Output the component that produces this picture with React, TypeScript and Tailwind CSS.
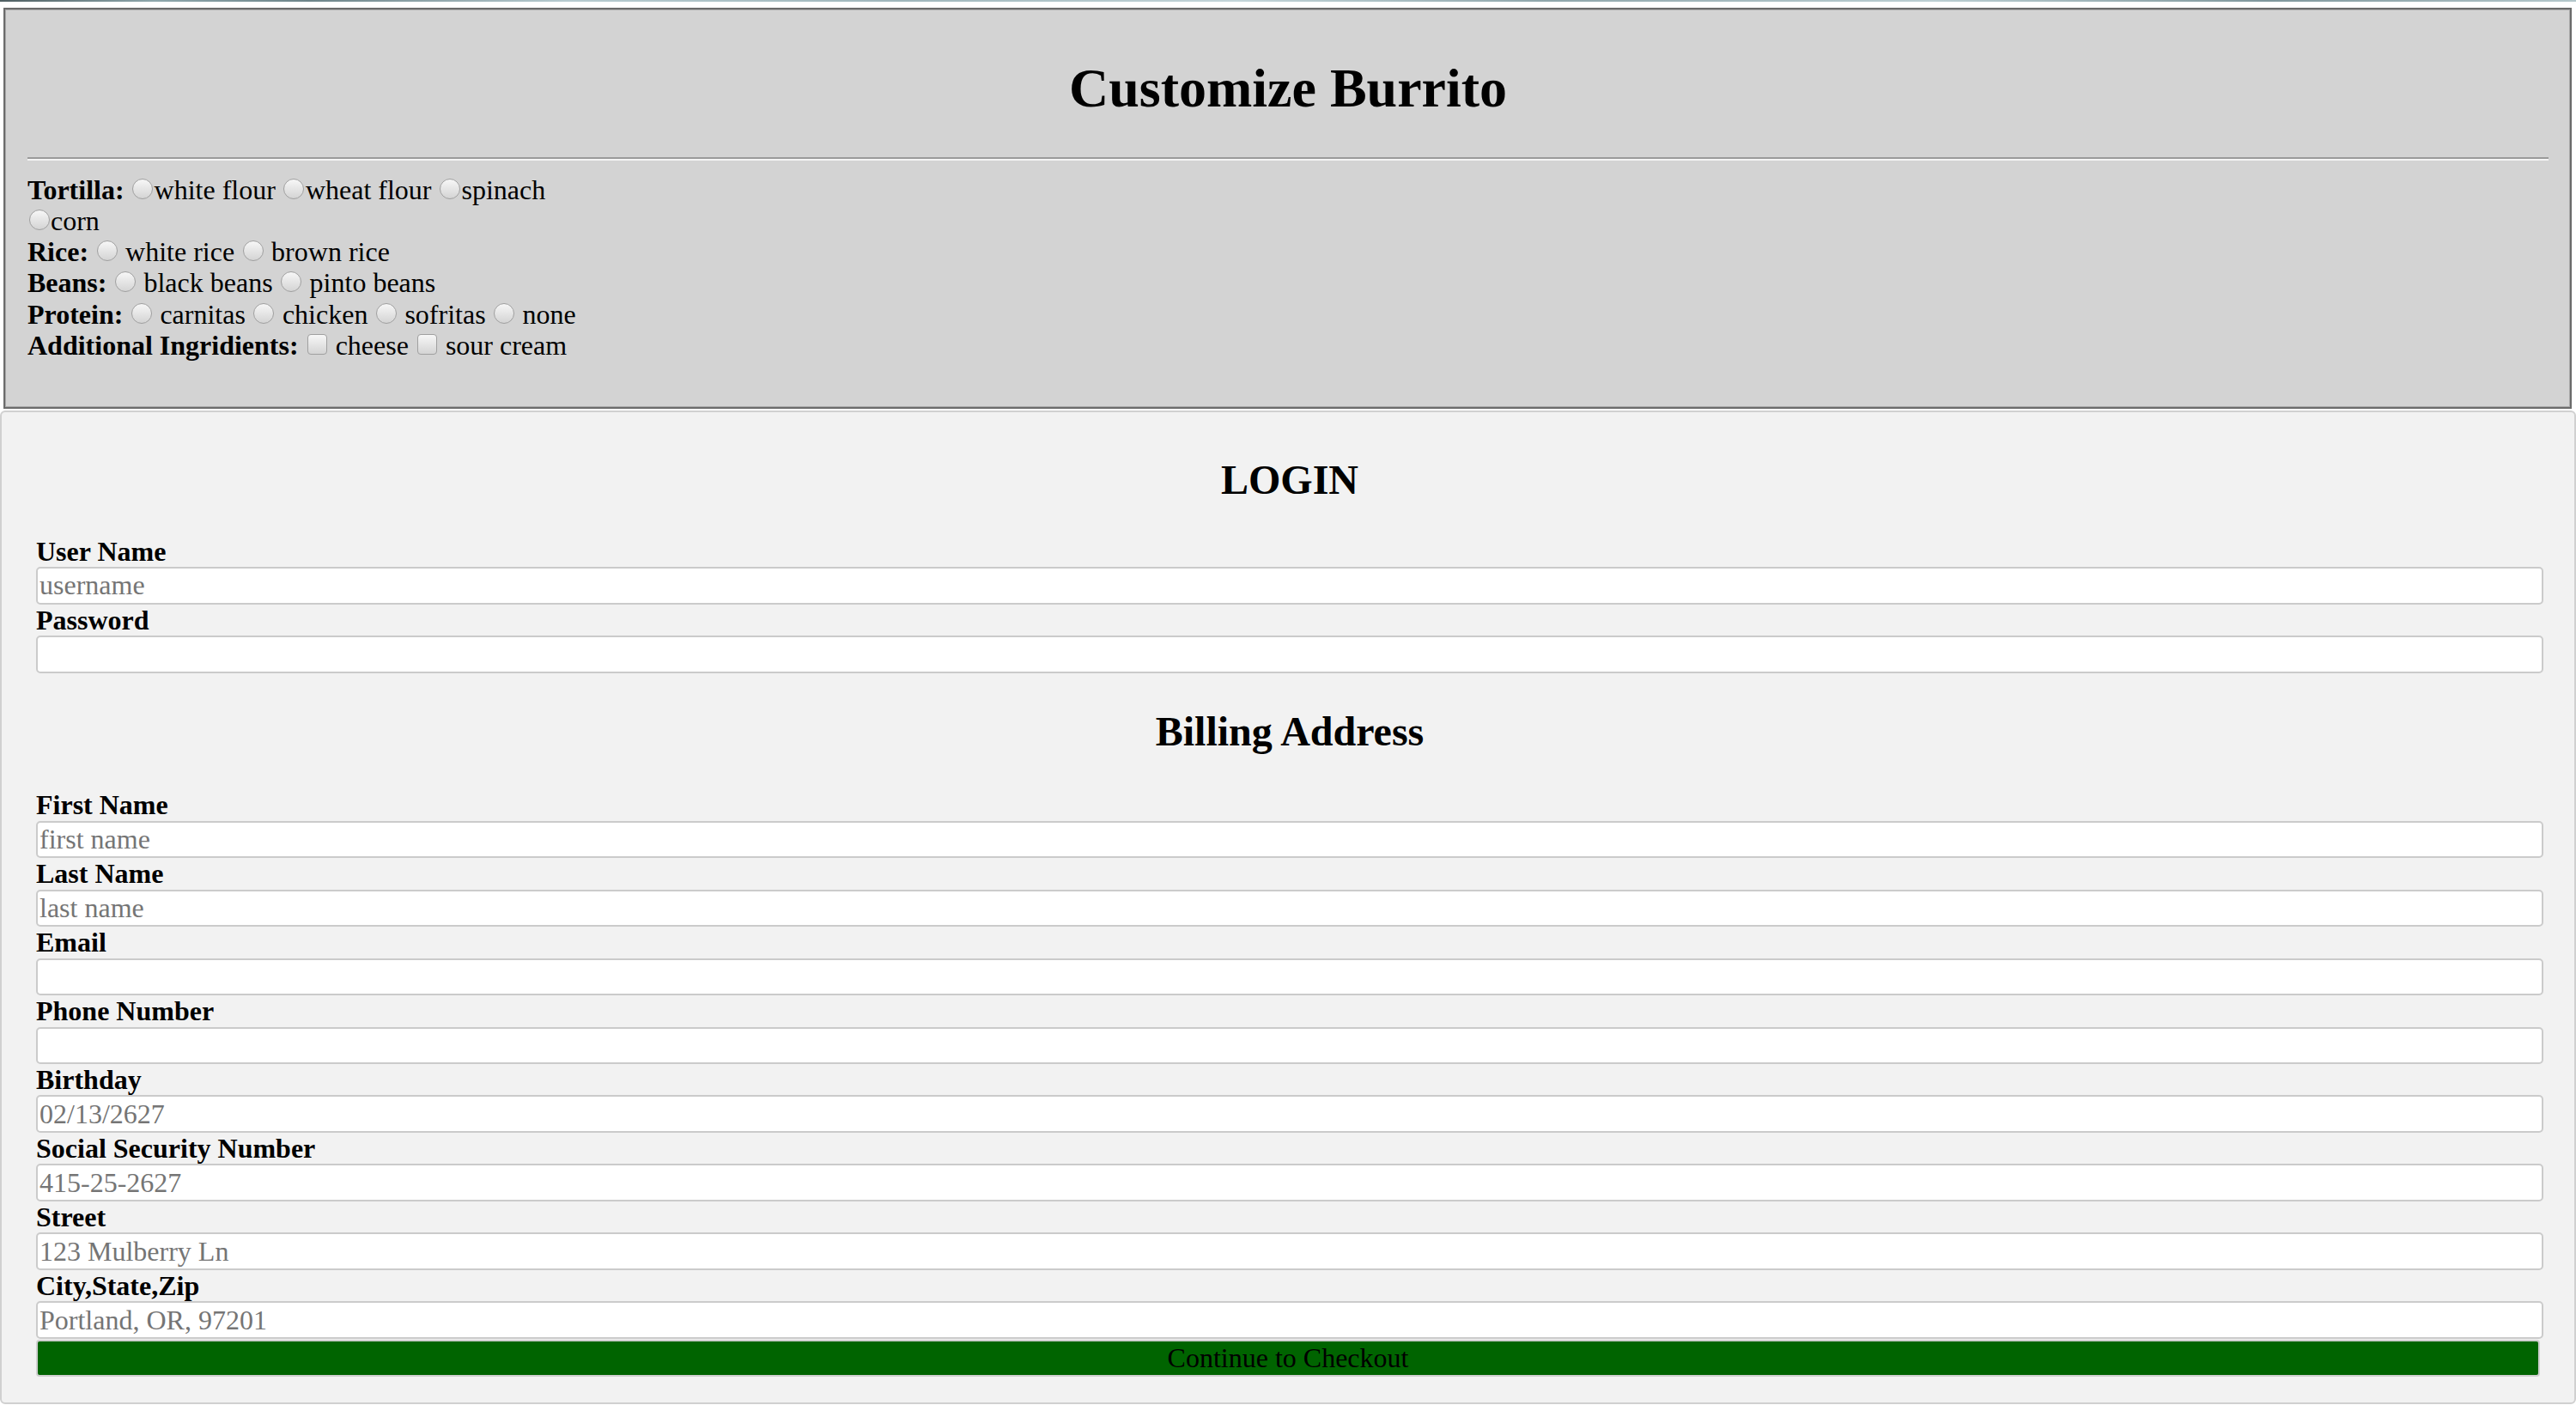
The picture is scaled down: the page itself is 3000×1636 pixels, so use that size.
import React from "react";

const Radio = () => (
  <span className="inline-block w-[24px] h-[24px] mx-[1.5px] rounded-full border-[1.5px] border-[#a0a0a0] bg-linear-to-b from-[#f7f7f7] to-[#d4d4d4] align-baseline" />
);

const Check = () => (
  <span className="inline-block w-[23px] h-[24px] mx-[2px] rounded-[4px] border-[1.5px] border-[#a0a0a0] bg-linear-to-b from-[#f7f7f7] to-[#d4d4d4] align-baseline" />
);

const Field = (props: { label: string; placeholder?: string; type?: string }) => (
  <>
    <label className="block font-bold text-[32px] leading-[36.8px]">{props.label}</label>
    <input
      type={props.type || "text"}
      placeholder={props.placeholder}
      className="block w-full h-[43.2px] px-[2px] bg-white border-2 border-[#cbcbcb] rounded-[5px] text-[32px] leading-[36.8px] font-['Liberation_Serif',serif] placeholder:text-[#757575] focus:outline-none"
    />
  </>
);

export default function App() {
  return (
    <div className="min-h-screen bg-white text-black font-['Liberation_Serif','Times_New_Roman',serif]">
      <div className="h-[2px] bg-[linear-gradient(90deg,#4f5f62,#8ea7ac_6%,#6d8489_12%,#b7cbd0_22%,#9fb6bb_35%,#c3d5d9_48%,#8fa6ab_60%,#bccfd3_75%,#7f979c_88%,#b5c8cc)]" />

      {/* burrito options */}
      <div className="mt-[7px] ml-[4px] mr-[5px] border-2 border-[#6b6b6b] bg-[#d3d3d3] shadow-[inset_0_0_0_1px_#a9a9a9] pl-[26px] pr-[25px] pt-[12px] pb-[54px]">
        <h1 className="text-center font-bold text-[64px] leading-[73.6px] mt-[43px] mb-[43px]">
          Customize Burrito
        </h1>
        <div className="border-t-2 border-t-[#9a9a9a] border-b-2 border-b-[#f4f4f4]" />
        <div className="mt-[16px] text-[32px] leading-[36.3px]">
          <div>
            <b>Tortilla:</b> <Radio />white flour <Radio />wheat flour <Radio />spinach
          </div>
          <div>
            <Radio />corn
          </div>
          <div>
            <b>Rice:</b> <Radio /> white rice <Radio /> brown rice
          </div>
          <div>
            <b>Beans:</b> <Radio /> black beans <Radio /> pinto beans
          </div>
          <div>
            <b>Protein:</b> <Radio /> carnitas <Radio /> chicken <Radio /> sofritas <Radio /> none
          </div>
          <div>
            <b>Additional Ingridients:</b> <Check /> cheese <Check /> sour cream
          </div>
        </div>
      </div>

      {/* login + billing */}
      <div className="mt-[2px] border-2 border-[#d0d0d0] rounded-[6px] bg-[#f2f2f2] pl-[40px] pr-[36px] pt-[11px] pb-[30px]">
        <h2 className="text-center font-bold text-[48px] leading-[55.2px] mt-[40px] mb-[37px]">LOGIN</h2>
        <Field label="User Name" placeholder="username" />
        <Field label="Password" type="password" />

        <h2 className="text-center font-bold text-[48px] leading-[55.2px] my-[40px]">Billing Address</h2>
        <Field label="First Name" placeholder="first name" />
        <Field label="Last Name" placeholder="last name" />
        <Field label="Email" />
        <Field label="Phone Number" />
        <Field label="Birthday" placeholder="02/13/2627" />
        <Field label="Social Security Number" placeholder="415-25-2627" />
        <Field label="Street" placeholder="123 Mulberry Ln" />
        <Field label="City,State,Zip" placeholder="Portland, OR, 97201" />
        <button className="block mt-[1px] mr-[4px] w-[calc(100%-4px)] h-[43px] bg-[#006400] border-2 border-[#cfcfcf] rounded-[4px] text-[32px] leading-[36.8px] text-black font-['Liberation_Serif',serif]">
          Continue to Checkout
        </button>
      </div>
    </div>
  );
}
